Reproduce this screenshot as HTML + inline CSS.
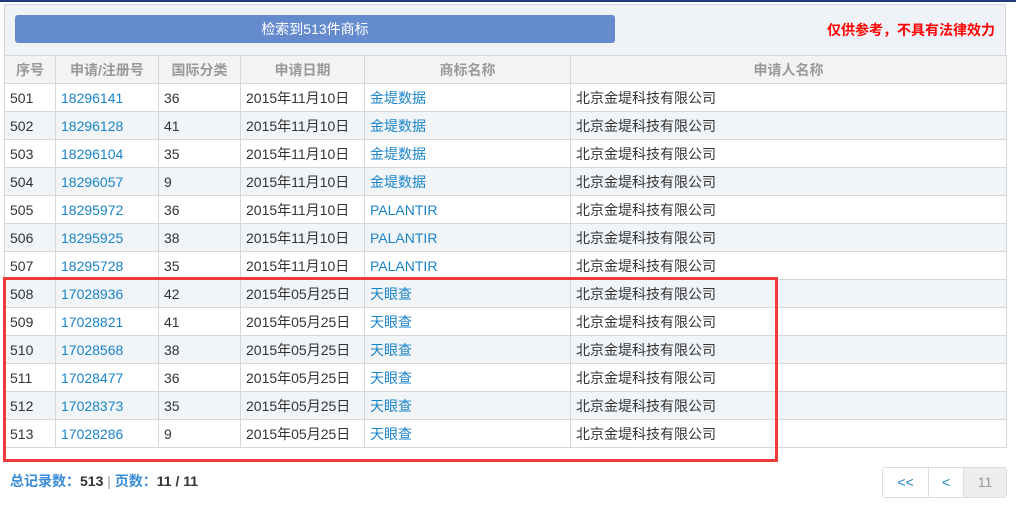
<!DOCTYPE html>
<html><head><meta charset="utf-8"><style>
body{margin:0;width:1016px;height:507px;background:#fff;font-family:"Liberation Sans","Noto Sans CJK SC",sans-serif;position:relative;overflow:hidden}
.topline{position:absolute;left:0;top:0;width:1016px;height:2px;background:#1d3c7a}
.panel{position:absolute;left:4px;top:4px;width:1000px;height:443px;border:1px solid #d6d6d6;border-bottom:none;background:#eff3f7}
.btn{position:absolute;left:10px;top:10px;width:600px;height:28px;background:#658bcf;border-radius:3px;color:#fff;font-size:14px;text-align:center;line-height:28px}
.warn{position:absolute;right:10px;top:15px;color:#f00;font-weight:bold;font-size:14px}
table{position:absolute;left:4px;top:55px;border-collapse:collapse;table-layout:fixed;width:1002px;font-size:14px;color:#333}
td,th{border:1px solid #d6d6d6;height:27px;padding:0 0 0 5px;text-align:left;white-space:nowrap;overflow:hidden}
th{background:#f3f3f3;color:#999;font-weight:bold;text-align:center;padding:0}
tr.a td{background:#fff}tr.b td{background:#f1f5f8}
.l{color:#1a84c9}
.red{position:absolute;left:3px;top:277px;width:769px;height:179px;border:3px solid #ef3b3b}
.foot{position:absolute;left:10px;top:471px;font-size:14px;color:#3b8ed5;font-weight:bold}
.foot b{color:#333}
.pg{position:absolute;left:882px;top:467px;height:29px;display:flex;border:1px solid #ddd;border-radius:3px}
.pg div{text-align:center;line-height:29px;font-size:14px;color:#1a84c9;border-right:1px solid #ddd;background:#fff}
.pg div:last-child{border:none;background:#eee;color:#999}
</style></head><body>
<div class="topline"></div>
<div class="panel"><div class="btn">检索到513件商标</div><div class="warn">仅供参考，不具有法律效力</div></div>
<table>
<colgroup><col style="width:51px"><col style="width:103px"><col style="width:82px"><col style="width:124px"><col style="width:206px"><col style="width:436px"></colgroup>
<tr><th>序号</th><th>申请/注册号</th><th>国际分类</th><th>申请日期</th><th>商标名称</th><th>申请人名称</th></tr>
<tr class="a"><td>501</td><td class="l">18296141</td><td>36</td><td>2015年11月10日</td><td class="l">金堤数据</td><td>北京金堤科技有限公司</td></tr>
<tr class="b"><td>502</td><td class="l">18296128</td><td>41</td><td>2015年11月10日</td><td class="l">金堤数据</td><td>北京金堤科技有限公司</td></tr>
<tr class="a"><td>503</td><td class="l">18296104</td><td>35</td><td>2015年11月10日</td><td class="l">金堤数据</td><td>北京金堤科技有限公司</td></tr>
<tr class="b"><td>504</td><td class="l">18296057</td><td>9</td><td>2015年11月10日</td><td class="l">金堤数据</td><td>北京金堤科技有限公司</td></tr>
<tr class="a"><td>505</td><td class="l">18295972</td><td>36</td><td>2015年11月10日</td><td class="l">PALANTIR</td><td>北京金堤科技有限公司</td></tr>
<tr class="b"><td>506</td><td class="l">18295925</td><td>38</td><td>2015年11月10日</td><td class="l">PALANTIR</td><td>北京金堤科技有限公司</td></tr>
<tr class="a"><td>507</td><td class="l">18295728</td><td>35</td><td>2015年11月10日</td><td class="l">PALANTIR</td><td>北京金堤科技有限公司</td></tr>
<tr class="b"><td>508</td><td class="l">17028936</td><td>42</td><td>2015年05月25日</td><td class="l">天眼查</td><td>北京金堤科技有限公司</td></tr>
<tr class="a"><td>509</td><td class="l">17028821</td><td>41</td><td>2015年05月25日</td><td class="l">天眼查</td><td>北京金堤科技有限公司</td></tr>
<tr class="b"><td>510</td><td class="l">17028568</td><td>38</td><td>2015年05月25日</td><td class="l">天眼查</td><td>北京金堤科技有限公司</td></tr>
<tr class="a"><td>511</td><td class="l">17028477</td><td>36</td><td>2015年05月25日</td><td class="l">天眼查</td><td>北京金堤科技有限公司</td></tr>
<tr class="b"><td>512</td><td class="l">17028373</td><td>35</td><td>2015年05月25日</td><td class="l">天眼查</td><td>北京金堤科技有限公司</td></tr>
<tr class="a"><td>513</td><td class="l">17028286</td><td>9</td><td>2015年05月25日</td><td class="l">天眼查</td><td>北京金堤科技有限公司</td></tr>
</table>
<div class="red"></div>
<div class="foot">总记录数：<b>513</b> <span style="color:#999;font-weight:normal">|</span> 页数：<b>11 / 11</b></div>
<div class="pg"><div style="width:45px">&lt;&lt;</div><div style="width:34px">&lt;</div><div style="width:42px">11</div></div>
</body></html>
